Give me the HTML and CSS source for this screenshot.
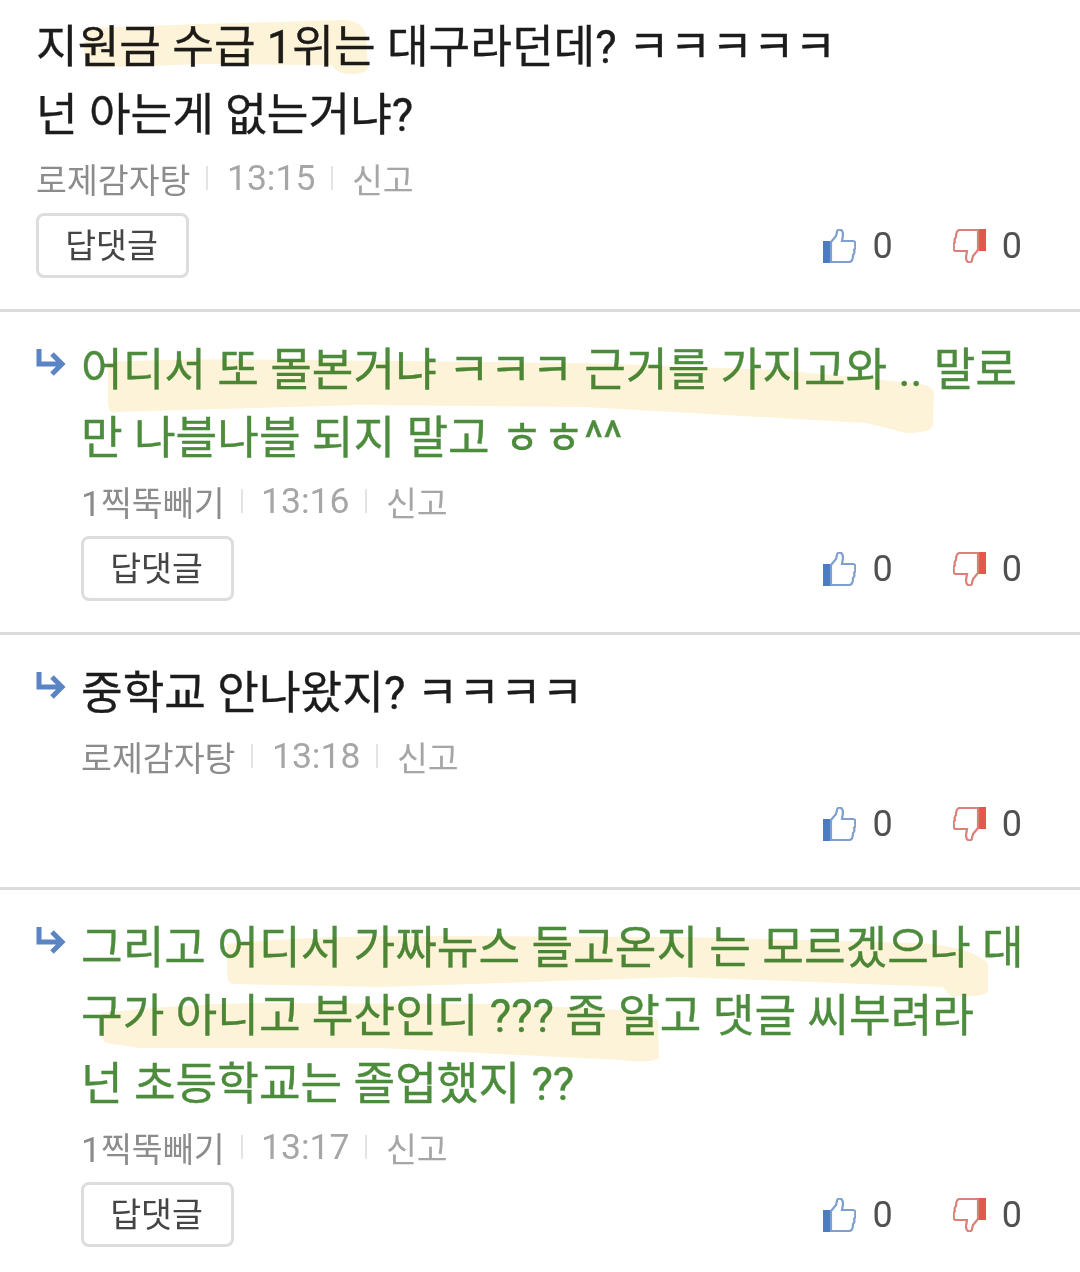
FILE: index.html
```html
<!DOCTYPE html>
<html lang="ko">
<head>
<meta charset="utf-8">
<title>댓글</title>
<link rel="stylesheet" href="styles.css">
</head>
<body>
<svg class="defs" width="0" height="0" aria-hidden="true">
  <symbol id="up" viewBox="0 0 34 34">
    <path d="M1 12h8v22H1z" fill="#4a7cc4"/>
    <path d="M9 13l5-6 1-4c0-2 2-3 4-2 2 1 2 3 2 5l-1 6h11c2 0 3 2 2 4 1 2 0 4-1 5 1 2 0 4-1 5 0 3-1 7-4 7H9z" fill="#fff" stroke="#7f9fd0" stroke-width="2.2"/>
  </symbol>
  <symbol id="down" viewBox="0 0 34 34">
    <g transform="rotate(180 17 17)">
      <path d="M1 12h8v22H1z" fill="#e2584c"/>
      <path d="M9 13l5-6 1-4c0-2 2-3 4-2 2 1 2 3 2 5l-1 6h11c2 0 3 2 2 4 1 2 0 4-1 5 1 2 0 4-1 5 0 3-1 7-4 7H9z" fill="#fff" stroke="#d98078" stroke-width="2.2"/>
    </g>
  </symbol>
  <symbol id="arrow" viewBox="0 0 30 30">
    <path d="M3 1v15h22M16 6l10 10-10 10" fill="none" stroke="#5b84c4" stroke-width="5"/>
  </symbol>
</svg>

<main class="page">
  <article class="comment first">
    <div class="body">
      <p class="text">지원금 수급 1위는 대구라던데? ㅋㅋㅋㅋㅋ<br>넌 아는게 없는거냐?</p>
      <div class="meta"><span class="author">로제감자탕</span><i class="sep"></i><span class="time">13:15</span><i class="sep"></i><span class="report">신고</span></div>
      <div class="actions">
        <button class="reply">답댓글</button>
        <div class="votes">
          <span class="vote"><svg class="thumb"><use href="#up"/></svg>0</span>
          <span class="vote"><svg class="thumb"><use href="#down"/></svg>0</span>
        </div>
      </div>
    </div>
  </article>

  <article class="comment nested">
    <svg class="arrow"><use href="#arrow"/></svg>
    <div class="body">
      <p class="text green">어디서 또 몰본거냐 ㅋㅋㅋ 근거를 가지고와 .. 말로<br>만 나블나블 되지 말고 ㅎㅎ^^</p>
      <div class="meta"><span class="author"><span class="digit">1</span>찍뚝빼기</span><i class="sep"></i><span class="time">13:16</span><i class="sep"></i><span class="report">신고</span></div>
      <div class="actions">
        <button class="reply">답댓글</button>
        <div class="votes">
          <span class="vote"><svg class="thumb"><use href="#up"/></svg>0</span>
          <span class="vote"><svg class="thumb"><use href="#down"/></svg>0</span>
        </div>
      </div>
    </div>
  </article>

  <article class="comment nested">
    <svg class="arrow"><use href="#arrow"/></svg>
    <div class="body">
      <p class="text">중학교 안나왔지? ㅋㅋㅋㅋ</p>
      <div class="meta"><span class="author">로제감자탕</span><i class="sep"></i><span class="time">13:18</span><i class="sep"></i><span class="report">신고</span></div>
      <div class="actions">
        <div class="votes">
          <span class="vote"><svg class="thumb"><use href="#up"/></svg>0</span>
          <span class="vote"><svg class="thumb"><use href="#down"/></svg>0</span>
        </div>
      </div>
    </div>
  </article>

  <article class="comment nested last">
    <svg class="arrow"><use href="#arrow"/></svg>
    <div class="body">
      <p class="text green">그리고 어디서 가짜뉴스 들고온지 는 모르겠으나 대<br>구가 아니고 부산인디 ??? 좀 알고 댓글 씨부려라<br>넌 초등학교는 졸업했지 ??</p>
      <div class="meta"><span class="author"><span class="digit">1</span>찍뚝빼기</span><i class="sep"></i><span class="time">13:17</span><i class="sep"></i><span class="report">신고</span></div>
      <div class="actions">
        <button class="reply">답댓글</button>
        <div class="votes">
          <span class="vote"><svg class="thumb"><use href="#up"/></svg>0</span>
          <span class="vote"><svg class="thumb"><use href="#down"/></svg>0</span>
        </div>
      </div>
    </div>
  </article>

  <svg class="marks" viewBox="0 0 1080 1272" aria-hidden="true">
    <path class="mark" d="M87 28L200 24 347 20Q362 22 366 34L368 68Q366 74 350 74 336 74 332 65L200 64 92 68Q84 66 84 48Z"/>
    <path class="mark" d="M108 362Q200 358 305 360L585 363 780 370 911 383Q932 384 934 392L933 426Q930 433 906 433L866 423 585 407 361 405 112 412Q108 412 108 400Z"/>
    <path class="mark" d="M227 944Q300 936 420 936L680 937 919 943Q970 946 988 963L988 992Q980 998 950 996L943 987 680 977 380 987 232 984Q227 982 227 970Z"/>
    <path class="mark" d="M101 1013Q180 1004 260 1003L500 1004 620 1010 658 1020 659 1058Q650 1064 620 1060L380 1048 140 1048 106 1043Q101 1040 101 1025Z"/>
  </svg>
</main>
</body>
</html>
```

FILE: styles.css
```css
* { box-sizing: border-box; }
html, body { margin: 0; padding: 0; background: #fff; }
.defs { position: absolute; }
.page {
  position: relative;
  width: 1080px;
  height: 1272px;
  overflow: hidden;
  font-family: Roboto, "Noto Sans CJK KR", sans-serif;
}
.comment {
  display: flex;
  padding: 21px 58px 31px 36px;
  border-bottom: 3px solid #dcdcdc;
}
.comment.first { padding-top: 10px; }
.comment.last { border-bottom: 0; }
.arrow { flex: none; width: 30px; height: 30px; margin: 15px 15px 0 0; }
.body { flex: 1; min-width: 0; }
.text {
  margin: 0;
  padding-top: 4px;
  font-size: 45.3px;
  line-height: 68px;
  color: #1c1c1c;
  white-space: nowrap;
  -webkit-text-stroke: 0.35px currentColor;
}
.text.green { color: #4c8c3c; }
.meta {
  display: flex;
  align-items: center;
  height: 44px;
  margin-top: 6px;
  font-size: 33.6px;
  color: #8c8c8c;
}
.digit { font-size: 35.5px; }
.time { font-size: 35.5px; }
.time, .report { color: #a6a6a6; }
.sep { width: 2px; height: 24px; margin: 0 18.5px 0 16px; background: #e4e4e4; }
.actions {
  display: flex;
  align-items: center;
  justify-content: flex-end;
  height: 65px;
  margin-top: 13px;
}
.reply {
  width: 153px;
  height: 65px;
  margin: 0 auto 0 0;
  padding: 0 2px 4px 0;
  border: 3px solid #dddddd;
  border-radius: 8px;
  background: #fff;
  font: inherit;
  font-size: 33.6px;
  color: #454545;
}
.votes { display: flex; gap: 63px; }
.vote {
  display: flex;
  align-items: center;
  gap: 17px;
  font-size: 36px;
  color: #505050;
}
.vote + .vote { gap: 15px; }
.thumb { width: 34px; height: 34px; margin-left: -3px; }
.marks {
  position: absolute;
  inset: 0;
  width: 1080px;
  height: 1272px;
  mix-blend-mode: multiply;
  pointer-events: none;
}
.mark { fill: #fdf3d8; }
```
